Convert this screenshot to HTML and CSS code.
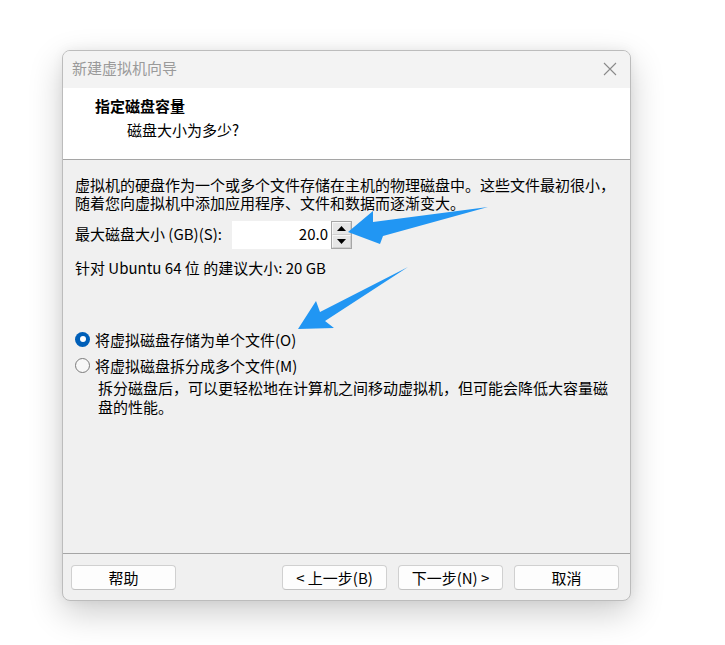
FILE: index.html
```html
<!DOCTYPE html>
<html lang="zh-CN">
<head>
<meta charset="utf-8">
<title>新建虚拟机向导</title>
<link rel="stylesheet" href="styles.css">
</head>
<body>
<div class="window">
  <div class="titlebar">
    <span class="title">新建虚拟机向导</span>
    <svg class="close" width="14" height="14" viewBox="0 0 14 14"><path d="M1 1 L13 13 M13 1 L1 13" stroke="#8a8a8a" stroke-width="1.1" fill="none"/></svg>
  </div>
  <div class="header">
    <div class="h-title">指定磁盘容量</div>
    <div class="h-sub">磁盘大小为多少?</div>
  </div>
  <div class="content">
    <p class="intro"><span class="line">虚拟机的硬盘作为一个或多个文件存储在主机的物理磁盘中。这些文件最初很小，</span><span class="line">随着您向虚拟机中添加应用程序、文件和数据而逐渐变大。</span></p>
    <div class="size-row">
      <span class="size-label">最大磁盘大小 (GB)(S):</span>
      <div class="num-input">20.0</div>
      <div class="spinner">
        <div class="spin-btn"><svg width="9" height="5" viewBox="0 0 9 5"><path d="M4.5 0 L9 5 L0 5 Z" fill="#000"/></svg></div>
        <div class="spin-btn"><svg width="9" height="5" viewBox="0 0 9 5"><path d="M0 0 L9 0 L4.5 5 Z" fill="#000"/></svg></div>
      </div>
    </div>
    <div class="recommend">针对 Ubuntu 64 位 的建议大小: 20 GB</div>
    <div class="radio-row first"><span class="radio checked"></span><span>将虚拟磁盘存储为单个文件(O)</span></div>
    <div class="radio-row"><span class="radio"></span><span>将虚拟磁盘拆分成多个文件(M)</span></div>
    <p class="desc"><span class="line">拆分磁盘后，可以更轻松地在计算机之间移动虚拟机，但可能会降低大容量磁</span><span class="line">盘的性能。</span></p>
  </div>
  <div class="footer">
    <button class="btn">帮助</button>
    <div class="spacer"></div>
    <button class="btn">&lt; 上一步(B)</button>
    <button class="btn">下一步(N) &gt;</button>
    <button class="btn">取消</button>
  </div>
</div>
<svg class="arrows" width="725" height="645" viewBox="0 0 725 645">
  <polygon points="348,232 373,211 373,222 488,207 383,236 380,244" fill="#2196f3"/>
  <polygon points="298,329 316,301 320,312 408,267 325,321 334,328" fill="#2196f3"/>
</svg>
</body>
</html>
```
FILE: styles.css
```css
html, body {
  margin: 0;
  padding: 0;
  background: #ffffff;
}
body {
  width: 725px;
  height: 645px;
  overflow: hidden;
  position: relative;
  font-family: "Noto Sans CJK SC", "Microsoft YaHei", sans-serif;
  font-size: 15px;
  color: #000;
}
.window {
  margin: 50px 0 0 62px;
  width: 569px;
  height: 551px;
  box-sizing: border-box;
  border: 1px solid #bcbcbc;
  border-radius: 8px;
  background: #f0f0f0;
  box-shadow: 0 12px 34px rgba(0, 0, 0, 0.2), 0 0 12px rgba(0, 0, 0, 0.05);
  display: flex;
  flex-direction: column;
  overflow: hidden;
}
.titlebar {
  height: 37px;
  box-sizing: border-box;
  background: #f3f3f3;
  display: flex;
  align-items: center;
  justify-content: space-between;
  padding: 0 13px 4px 9px;
  flex: none;
}
.title {
  color: #9a9a9a;
  font-size: 15px;
  line-height: 20px;
}
.close {
  display: block;
  margin-top: 2px;
}
.header {
  height: 63px;
  background: #ffffff;
  border-bottom: 1px solid #a5a5a5;
  padding: 8px 0 0 32px;
  box-sizing: content-box;
  flex: none;
}
.h-title {
  font-weight: 700;
  line-height: 20px;
  height: 20px;
}
.h-sub {
  line-height: 20px;
  margin-top: 4px;
  padding-left: 32px;
}
.content {
  flex: 1;
  padding: 16px 12px 0 12px;
}
.intro,
.desc {
  margin: 0;
  white-space: nowrap;
}
.line {
  display: block;
  height: 18px;
  line-height: 18px;
}
.desc .line {
  height: 19px;
  line-height: 19px;
}
.size-row {
  margin-top: 9px;
  display: flex;
  align-items: center;
  height: 28px;
}
.size-label {
  width: 157px;
  line-height: 18px;
  margin-top: -3px;
}
.num-input {
  width: 99px;
  height: 28px;
  box-sizing: border-box;
  background: #ffffff;
  text-align: right;
  line-height: 26px;
  padding-right: 3px;
}
.spinner {
  width: 21px;
  height: 28px;
  box-sizing: border-box;
  border: 1px solid #a6a6a6;
  display: flex;
  flex-direction: column;
  background: #e6e6e6;
}
.spin-btn {
  flex: 1;
  display: flex;
  align-items: center;
  justify-content: center;
  border: 1px solid #f7f7f7;
  border-right-color: #cfcfcf;
  border-bottom-color: #cfcfcf;
}
.spin-btn svg {
  display: block;
}
.recommend {
  margin-top: 10px;
  line-height: 18px;
}
.radio-row {
  display: flex;
  align-items: center;
  height: 26px;
  gap: 5px;
}
.radio-row.first {
  margin-top: 49px;
}
.radio {
  width: 15px;
  height: 15px;
  box-sizing: border-box;
  border-radius: 50%;
  border: 1px solid #7a7a7a;
  background: #f7f7f7;
  flex: none;
  position: relative;
}
.radio.checked {
  border: none;
  background: #005fb8;
}
.radio.checked::after {
  content: "";
  position: absolute;
  left: 4.5px;
  top: 4.5px;
  width: 6px;
  height: 6px;
  border-radius: 50%;
  background: #ffffff;
}
.desc {
  padding-left: 23px;
}
.footer {
  flex: none;
  border-top: 1px solid #a5a5a5;
  display: flex;
  align-items: flex-start;
  padding: 11px 11px 0 8px;
  gap: 11px;
  box-sizing: border-box;
  height: 47px;
}
.spacer {
  flex: 1;
}
.btn {
  width: 105px;
  height: 25px;
  border: 1px solid #d0d0d0;
  border-bottom-color: #c2c2c2;
  border-radius: 4px;
  background: #fdfdfd;
  font-family: inherit;
  font-size: 15px;
  color: #000;
  padding: 0;
  line-height: 22px;
}
.arrows {
  position: absolute;
  left: 0;
  top: 0;
  pointer-events: none;
}
```
